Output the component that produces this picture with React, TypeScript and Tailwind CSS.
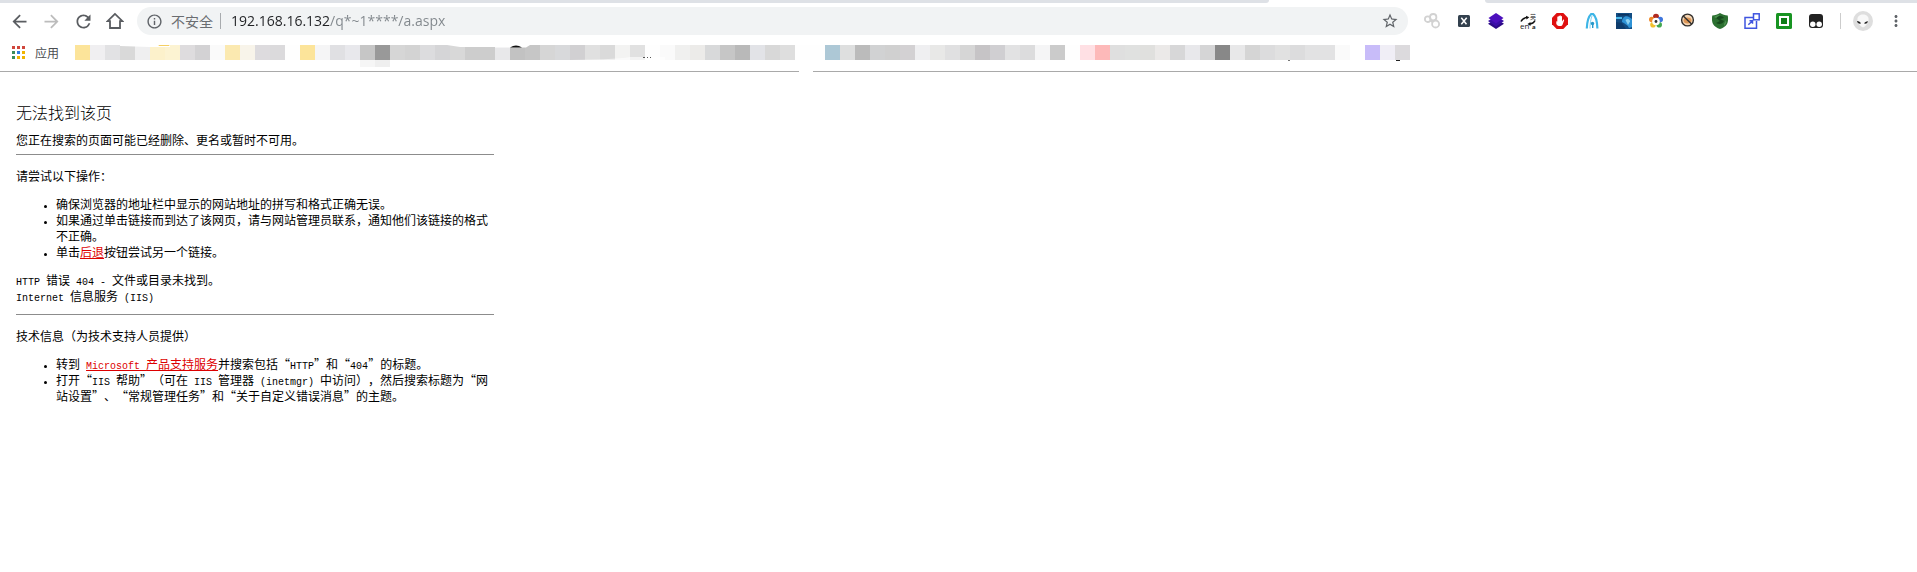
import { useState } from "react";
import type { ReactNode } from "react";
import {
  MdArrowBack,
  MdArrowForward,
  MdInfoOutline,
  MdMoreVert,
  MdRefresh,
  MdStarBorder,
} from "react-icons/md";

const bookmarkTiles: string[] = [
  "#fce49a", "#f0eff1", "#e2e2e4", "#d9d9d9", "#efeff0", "#fcf1cb", "#fcf3d2", "#dedcde", "#d3d2d4", "#fafafa",
  "#fbe9b0", "#f8f4ea", "#dddbde", "#dbdadc", "#fefefe", "#fce49a", "#f5f5f6", "#e0e0e3", "#e8e8ec", "#c6c6c6",
  "#999999", "#d6d6d6", "#d3d3d3", "#dcdcde", "#d5d5d7", "#d8d8d8", "#cdcdcd", "#cdcdcd", "#e8e8ea", "#c2c2c2",
  "#c6c6c6", "#d6d6d6", "#d8d9db", "#d1d0d2", "#e0e0e0", "#dadada", "#f3f3f2", "#e1e1e1", "#fefefe", "#fafafa",
  "#f0f0ef", "#ecebe9", "#d8d9da", "#c6c6c6", "#b9b9b9", "#e2e3e7", "#d8d8d8", "#dedede", "#fefefe", "#fefefe",
  "#adc8d6", "#dedfdf", "#bbbbbb", "#d1d2d3", "#d0d0d0", "#d3d1d3", "#efeff1", "#e8e8e7", "#e0e0e1", "#d6d6d6",
  "#c6c4c6", "#d0cfd2", "#e2e2e3", "#dcdcdd", "#f5f5f6", "#cbcbcb", "#fefefe", "#ffe0e4", "#fdb9b9", "#dfdfdf",
  "#e0e1e0", "#e0e0de", "#ebe9e8", "#d7d7d8", "#e8e8eb", "#d5d5d6", "#888888", "#e8e8e9", "#d5d5d5", "#dcdcdd",
  "#e1e1e1", "#dcdcdd", "#e2e2e3", "#e2e2e3", "#fafafa", "#ffffff", "#c8bcf9", "#f0eef6", "#dcdadd",
];

const appDots: string[] = [
  "#d0473c", "#d0473c", "#d0473c",
  "#3b8d5a", "#2f7de1", "#f0b400",
  "#3b8d5a", "#f0b400", "#f0b400",
];

const extensions: { label: string; art: ReactNode }[] = [
  {
    label: "Links",
    art: (
      <g fill="none" stroke="#d2d2d2" strokeWidth="1.8">
        <circle cx="3.7" cy="6.2" r="2.8" />
        <circle cx="9.2" cy="4.2" r="3.2" />
        <circle cx="11.6" cy="11" r="3.5" />
        <path d="M6.3 7.5l2.4 1.8" />
      </g>
    ),
  },
  {
    label: "X",
    art: (
      <>
        <rect x="2" y="2" width="12" height="12" rx="1.5" fill="#33414e" />
        <path d="M5.3 4.8l5.2 6.4M10.7 4.8l-5.4 6.4" stroke="#fff" strokeWidth="1.5" />
      </>
    ),
  },
  {
    label: "Layers",
    art: (
      <>
        <path d="M8 6L16 10.8 8 16 0 10.8z" fill="#2c0a86" />
        <path d="M8 3L16 8 8 13.4 0 8z" fill="#3a0ea8" />
        <path d="M8 0L15.5 5 8 10.4 .5 5z" fill="#4c10bd" />
      </>
    ),
  },
  {
    label: "Translate",
    art: (
      <>
        <path d="M1 8.5C2 6 4 4.800 7 4.500M15 7.500C14 9.800 12 10.800 10 11" fill="none" stroke="#111" strokeWidth="1.500" />
        <path d="M6 2.700L9.300 4.200 6.500 6.500zM10.500 9L7.500 11 10.500 13z" fill="#111" />
        <text x="0" y="15.5" fontSize="8" fontFamily="Open Sans, sans-serif" fill="#222">en</text>
        <text x="10" y="5.5" fontSize="6" fontFamily="Noto Sans CJK SC, sans-serif" fill="#333">英</text>
        <text x="12" y="15.5" fontSize="6" fontWeight="700" fontFamily="Open Sans, sans-serif" fill="#222">a</text>
      </>
    ),
  },
  {
    label: "Block ads",
    art: (
      <>
        <path d="M4.7 0h6.6L16 4.7v6.6L11.3 16H4.7L0 11.3V4.7z" fill="#df1010" />
        <path
          d="M4.3 8.2l1 .2V4.1c0-.8 1.1-.8 1.1 0V3.3c0-.8 1.2-.8 1.2 0v-.5c0-.8 1.2-.8 1.2 0v.7c0-.8 1.2-.8 1.2 0v5l1-1.6c.5-.6 1.3-.2 1.1.5l-1.5 4.2c-.4 1-1.2 1.5-2.3 1.5-2.5 0-3.5-1.2-4-2.4z"
          fill="#fff"
        />
      </>
    ),
  },
  {
    label: "Arch",
    art: (
      <>
        <path d="M2.8 15.5C3 10 4.5 3.5 7 1.2h2.2C12 3.5 13.2 10 13.4 15.5" fill="none" stroke="#3db5e6" strokeWidth="2.2" />
        <path d="M6 15.5C6 11 7 5 8 3" fill="none" stroke="#7dd0f0" strokeWidth="1" />
        <circle cx="8.5" cy="10.5" r="1.7" fill="#2597c9" />
        <path d="M8 11h1.4v4H8z" fill="#2597c9" />
      </>
    ),
  },
  {
    label: "Photo",
    art: (
      <>
        <rect width="16" height="16" fill="#124c82" />
        <path d="M0 4h6v2H0z" fill="#49b7e8" />
        <path d="M6 9c0-4 3-7 7-5l3 2v8l-3 1c-1-3-4-4-7-6z" fill="#2f93d6" />
        <path d="M9.5 7c2-2 4.500-1 4.500 1.500L12 12z" fill="#8ed3f2" />
        <path d="M0 9l6 1 4 6H0z" fill="#0e3c6c" />
        <path d="M2 1h11v1.500H2z" fill="#0b3460" />
      </>
    ),
  },
  {
    label: "Flower",
    art: (
      <>
        <circle cx="8" cy="3.8" r="3" fill="#b02a20" />
        <circle cx="3.8" cy="6.5" r="2.8" fill="#f08a2c" />
        <circle cx="12.2" cy="6.5" r="2.8" fill="#3f76dd" />
        <circle cx="5" cy="11.7" r="2.8" fill="#f2c12e" />
        <circle cx="11.2" cy="11.7" r="2.8" fill="#44a852" />
        <circle cx="8" cy="8.5" r="3.8" fill="#fff" />
        <circle cx="8" cy="8.5" r="1.4" fill="#333" />
      </>
    ),
  },
  {
    label: "Disabled",
    art: (
      <>
        <circle cx="7.5" cy="7" r="5.9" fill="#f5d5b3" stroke="#33302d" strokeWidth="1.4" />
        <ellipse cx="7.5" cy="7.5" rx="4" ry="3" fill="#dd9656" />
        <path d="M3.3 3l8.500 8.300" stroke="#33302d" strokeWidth="1.4" />
      </>
    ),
  },
  {
    label: "Shield",
    art: (
      <>
        <path d="M8 0c2.500 1.800 5 2.300 7.700 2.500.6 3 .5 6-.7 8.500-1.500 2.500-4 4-7 5-3-1-5.500-2.500-7-5C-.2 8.500-.3 5.500.3 2.500 3 2.300 5.500 1.800 8 0z" fill="#2c7031" />
        <path d="M4 5c3-3 7-2 8 0l-4 1 4 2c-1 3-5 4-8 2l4-2z" fill="#174a1d" />
        <path d="M2 4c2-1.500 4-2 6-2L4 5zM12 11l2-4 .3 3-2.300 3z" fill="#4d9150" />
      </>
    ),
  },
  {
    label: "Open in window",
    art: (
      <g fill="none" stroke="#3f55e0" strokeWidth="1.5">
        <path d="M9 4.5H1v10.700h11.500V8" />
        <rect x="9.5" y=".8" width="5.7" height="6" fill="#fff" />
        <path d="M4.3 11.7L8.300 8M5.500 7.800h3v3" />
      </g>
    ),
  },
  {
    label: "Frame",
    art: (
      <>
        <rect width="16" height="16" rx="1.5" fill="#189422" />
        <rect x="3" y="3" width="10" height="10" fill="#fff" />
        <rect x="5" y="5" width="6" height="6" fill="#0f7d17" />
      </>
    ),
  },
  {
    label: "Scripts",
    art: (
      <>
        <rect x="1" y="1" width="14" height="14" rx="3" fill="#222" />
        <circle cx="4.8" cy="11.2" r="2.7" fill="#fff" />
        <circle cx="11.2" cy="11.2" r="2.7" fill="#fff" />
      </>
    ),
  },
];

function Latin({ children }: { children: ReactNode }) {
  return <span className="font-['Liberation_Mono',monospace] text-[10px] leading-none">{children}</span>;
}

function HomeIcon() {
  return (
    <svg viewBox="0 0 18 18" className="size-[18px]" aria-hidden="true">
      <path d="M9 1.9L1.5 9.2H4V16h10V9.2h2.5z" fill="none" stroke="currentColor" strokeWidth="1.8" />
    </svg>
  );
}

function Toolbar() {
  const [url, setUrl] = useState("192.168.16.132/q*~1****/a.aspx");
  return (
    <div className="flex h-[35px] items-center pt-px pr-3 pl-[9px]">
      <div className="flex items-center gap-3 text-[#5a5d61]">
        <button aria-label="后退" className="grid size-5 place-items-center"><MdArrowBack size={21} /></button>
        <button aria-label="前进" className="grid size-5 place-items-center text-[#bcbcbc]"><MdArrowForward size={21} /></button>
        <button aria-label="重新加载" className="grid size-5 place-items-center"><MdRefresh size={21} /></button>
        <button aria-label="主页" className="grid size-5 place-items-center"><HomeIcon /></button>
      </div>
      <div className="ml-3 flex h-7 min-w-0 flex-1 items-center rounded-full bg-[#f1f3f4] pr-[9px] pl-[9px]">
        <MdInfoOutline size={17} className="shrink-0 text-[#5f6368]" />
        <label
          htmlFor="address"
          className="ml-2 shrink-0 border-r border-[#a8abae] pr-[7px] font-['Noto_Sans_CJK_SC',sans-serif] text-sm leading-4 text-[#6a6d71]"
        >
          不安全
        </label>
        <input
          id="address"
          type="text"
          value={url}
          onChange={(e) => setUrl(e.target.value)}
          className="ml-[10px] min-w-0 flex-1 bg-[linear-gradient(to_right,#202124_99px,#80868b_99px)] bg-clip-text font-['Open_Sans',sans-serif] text-sm text-transparent outline-none"
        />
        <button aria-label="收藏" className="text-[#5f6368]"><MdStarBorder size={18} /></button>
      </div>
      <div className="ml-4 flex items-center gap-4">
        {extensions.map((ext) => (
          <button key={ext.label} aria-label={ext.label}>
            <svg viewBox="0 0 16 16" className="size-4" aria-hidden="true">{ext.art}</svg>
          </button>
        ))}
      </div>
      <div className="ml-4 h-4 w-px bg-[#cccccc]" />
      <button aria-label="用户" className="ml-3">
        <svg viewBox="0 0 20 20" className="size-5" aria-hidden="true">
          <circle cx="10" cy="10" r="10" fill="#dedede" />
          <path d="M10 3.5c4 0 6 2.5 5.5 6-.5 3-3 6-5.500 7-2.500-1-5-4-5.500-7C4 6 6 3.500 10 3.500z" fill="#f8f8f8" />
          <path d="M4 10c2 .2 3.5 1 4 2.600-2 .5-3.500-.3-4-2.600zM15 10.300c-2 .2-3.500 1-4 2.300 2 .5 3.500-.1 4-2.300z" fill="#222" />
        </svg>
      </button>
      <button aria-label="菜单" className="ml-[14px] text-[#5f6368]"><MdMoreVert size={18} /></button>
    </div>
  );
}

function BookmarksBar() {
  return (
    <div className="flex h-[33px] items-start pt-[7px] pl-3">
      <a href="#apps" className="flex h-[15px] items-center font-['Noto_Sans_CJK_SC',sans-serif] text-xs leading-4 text-[#4a4d51]">
        <span className="mr-[10px] grid grid-cols-3 gap-[2px]">
          {appDots.map((color, i) => (
            <span key={i} className="size-[3px]" style={{ backgroundColor: color }} />
          ))}
        </span>
        应用
      </a>
      <div className="relative ml-4 flex">
        {bookmarkTiles.map((color, i) => (
          <span key={i} className="h-[15px] w-[15px]" style={{ backgroundColor: color }} />
        ))}
        <span className="absolute top-[15px] left-[285px] h-[7px] w-[15px] bg-[#f6f6f6]" />
        <span className="absolute top-[15px] left-[300px] h-[7px] w-[15px] bg-[#efefef]" />
        <span className="absolute top-0 left-[84px] h-px w-[10px] bg-[#f5cf62]" />
        <svg viewBox="0 0 1335 15" className="absolute inset-0 h-[15px] w-[1335px]" aria-hidden="true">
          <path d="M45 0h38v1h12v1L75 2 45 1zM372 0h63v2h-50zM420 0h35l-4 2.500h-31z" fill="#fff" />
          <path d="M435 2.500q6-4 12 0z" fill="#111" />
          <path d="M480 15q60 0 75-3h35v3z" fill="#fff" fillOpacity=".6" />
          <path d="M568 12h2v1h-2zM572 12h1v1h-1zM575 12h1v1h-1z" fill="#555" />
        </svg>
        <span className="absolute top-[15px] left-[1213px] h-px w-[2px] bg-[#777777]" />
        <span className="absolute top-[15px] left-[1321px] h-px w-1 bg-[#222222]" />
      </div>
    </div>
  );
}

function ErrorPage() {
  return (
    <main
      lang="zh-CN"
      className="mx-4 max-w-[478px] pt-[30px] font-['Noto_Sans_CJK_SC',sans-serif] text-xs leading-4 text-black [text-spacing-trim:space-all]"
    >
      <h1 className="text-base leading-5 font-light">无法找到该页</h1>
      <p className="mt-[10px]">您正在搜索的页面可能已经删除、更名或暂时不可用。</p>
      <hr className="mt-[6px] border-[#8c8c8c]" />
      <p className="mt-[13px]">请尝试以下操作：</p>
      <ul className="mt-3 list-disc pl-10 marker:text-[7px]">
        <li>确保浏览器的地址栏中显示的网站地址的拼写和格式正确无误。</li>
        <li>如果通过单击链接而到达了该网页，请与网站管理员联系，通知他们该链接的格式不正确。</li>
        <li>
          单击<a href="#back" className="text-[#dd0000] underline">后退</a>按钮尝试另一个链接。
        </li>
      </ul>
      <p className="mt-3">
        <Latin>HTTP </Latin>错误<Latin> 404 - </Latin>文件或目录未找到。
        <br />
        <Latin>Internet </Latin>信息服务<Latin> (IIS)</Latin>
      </p>
      <hr className="mt-[10px] border-[#8c8c8c]" />
      <p className="mt-[13px]">技术信息（为技术支持人员提供）</p>
      <ul className="mt-3 list-disc pl-10 marker:text-[7px]">
        <li>
          转到<Latin> </Latin>
          <a href="#support" className="text-[#dd0000] underline"><Latin>Microsoft </Latin>产品支持服务</a>
          并搜索包括“<Latin>HTTP</Latin>”和“<Latin>404</Latin>”的标题。
        </li>
        <li>
          打开“<Latin>IIS </Latin>帮助”（可在<Latin> IIS </Latin>管理器<Latin> (inetmgr) </Latin>中访问），然后搜索标题为“网站设置”、“常规管理任务”和“关于自定义错误消息”的主题。
        </li>
      </ul>
    </main>
  );
}

export default function App() {
  return (
    <div className="min-h-screen bg-white">
      <header>
        <div className="flex h-[3px]">
          <div className="w-[1269px] rounded-br-sm bg-[#dee1e6]" />
          <div className="w-[216px]" />
          <div className="flex-1 rounded-bl-sm bg-[#dee1e6]" />
        </div>
        <Toolbar />
        <BookmarksBar />
        <div className="flex h-px gap-[14px]">
          <div className="w-[799px] bg-[#a9a9a9]" />
          <div className="flex-1 bg-[#a9a9a9]" />
        </div>
      </header>
      <ErrorPage />
    </div>
  );
}
